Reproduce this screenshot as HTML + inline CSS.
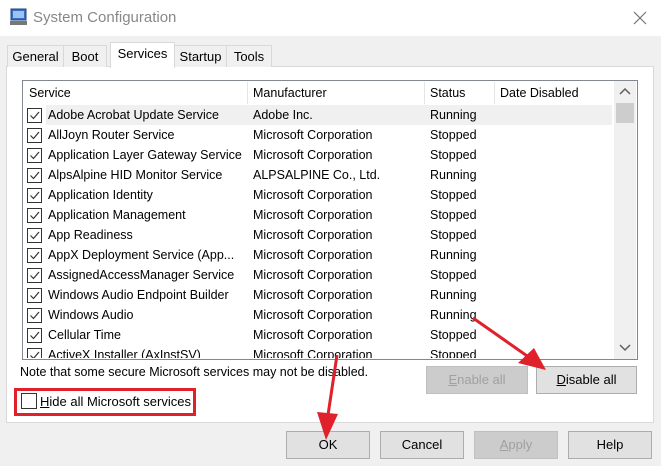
<!DOCTYPE html><html><head><style>
body{margin:0;width:661px;height:466px;background:#f0f0f0;font-family:"Liberation Sans",sans-serif;font-size:12.5px;color:#000;position:relative;overflow:hidden}
.a{position:absolute}
.title{left:0;top:0;width:661px;height:36px;background:#fff}
.tab{position:absolute;top:45px;height:21px;border:1px solid #d9d9d9;border-bottom:none;background:#f0f0f0;line-height:22px;text-align:center;font-size:13px}
.panel{left:6px;top:66px;width:646px;height:355px;background:#fff;border:1px solid #d9d9d9}
.list{left:22px;top:80px;width:614px;height:278px;border:1px solid #828790;background:#fff;overflow:hidden}
.row{position:absolute;left:0;height:20px;width:590px;line-height:20px}
.row span{position:absolute;white-space:nowrap}
.cb{position:absolute;left:4px;top:3px;width:13px;height:13px;border:1px solid #333;background:#fff}
.cb svg{position:absolute;left:1px;top:1px}
.btn{position:absolute;height:26px;border:1px solid #adadad;background:#e1e1e1;text-align:center;line-height:26px;font-size:13px}
.dis{color:#a0a0a0;background:#ccc;border-color:#bfbfbf}
</style></head><body>
<div class="a title"></div>
<svg class="a" style="left:9px;top:8px" width="20" height="18"><rect x="2" y="1" width="15" height="11" fill="#3a6fc9" stroke="#1c3f80"/><rect x="4" y="3" width="11" height="7" fill="#9cc3f0"/><rect x="1" y="13" width="17" height="4" fill="#777"/></svg>
<div class="a" style="left:33px;top:9px;font-size:15px;color:#888">System Configuration</div>
<svg class="a" style="left:633px;top:11px" width="14" height="14"><path d="M1 1L13 13M13 1L1 13" stroke="#777" stroke-width="1.2"/></svg>
<div class="a panel"></div>
<div class="tab" style="left:7px;width:55px">General</div>
<div class="tab" style="left:63px;width:42px">Boot</div>
<div class="tab" style="left:110px;top:42px;height:25px;width:63px;background:#fff;z-index:2">Services</div>
<div class="tab" style="left:174px;width:51px">Startup</div>
<div class="tab" style="left:226px;width:44px">Tools</div>
<div class="a list">
<div class="row" style="top:1px;height:22px;line-height:22px">
<span style="left:6px">Service</span><span style="left:230px">Manufacturer</span><span style="left:407px">Status</span><span style="left:477px">Date Disabled</span>
<div class="a" style="left:224px;top:0;width:1px;height:22px;background:#e5e5e5"></div>
<div class="a" style="left:401px;top:0;width:1px;height:22px;background:#e5e5e5"></div>
<div class="a" style="left:471px;top:0;width:1px;height:22px;background:#e5e5e5"></div>
</div>
<div class="a" style="left:23px;top:24px;width:566px;height:20px;background:#f0f0f0"></div>
<div class="a" style="left:591px;top:0;width:22px;height:278px;background:#f0f0f0"></div>
<div class="a" style="left:593px;top:22px;width:18px;height:20px;background:#cdcdcd"></div>
<svg class="a" style="left:596px;top:7px" width="12" height="8"><path d="M1 6L6 1L11 6" stroke="#606060" fill="none" stroke-width="1.5"/></svg>
<svg class="a" style="left:596px;top:263px" width="12" height="8"><path d="M1 1L6 6L11 1" stroke="#606060" fill="none" stroke-width="1.5"/></svg>
</div>
<div id="rows"></div>
<script>
var d=[["Adobe Acrobat Update Service","Adobe Inc.","Running"],["AllJoyn Router Service","Microsoft Corporation","Stopped"],["Application Layer Gateway Service","Microsoft Corporation","Stopped"],["AlpsAlpine HID Monitor Service","ALPSALPINE  Co., Ltd.","Running"],["Application Identity","Microsoft Corporation","Stopped"],["Application Management","Microsoft Corporation","Stopped"],["App Readiness","Microsoft Corporation","Stopped"],["AppX Deployment Service (App...","Microsoft Corporation","Running"],["AssignedAccessManager Service","Microsoft Corporation","Stopped"],["Windows Audio Endpoint Builder","Microsoft Corporation","Running"],["Windows Audio","Microsoft Corporation","Running"],["Cellular Time","Microsoft Corporation","Stopped"],["ActiveX Installer (AxInstSV)","Microsoft Corporation","Stopped"]];
var h='<div class="a" style="left:23px;top:105px;width:589px;height:253px;overflow:hidden">';
d.forEach(function(r,i){h+='<div class="row" style="top:'+(i*20)+'px"><div class="cb"><svg width="11" height="11"><path d="M1.5 5.5L4.5 8.5L10 2" stroke="#333" fill="none" stroke-width="1.2"/></svg></div><span style="left:25px">'+r[0]+'</span><span style="left:230px">'+r[1]+'</span><span style="left:407px">'+r[2]+'</span></div>';});
h+='</div>';document.getElementById('rows').innerHTML=h;
</script>
<div class="a" style="left:20px;top:365px">Note that some secure Microsoft services may not be disabled.</div>
<div class="btn dis" style="left:426px;top:366px;width:100px"><u>E</u>nable all</div>
<div class="btn" style="left:536px;top:366px;width:99px"><u>D</u>isable all</div>
<div class="a" style="left:14px;top:388px;width:176px;height:22px;border:3px solid #e0202a"></div>
<div class="a" style="left:21px;top:393px;width:14px;height:14px;border:1px solid #333;background:#fff"></div>
<div class="a" style="left:40px;top:394px;font-size:13px"><u>H</u>ide all Microsoft services</div>
<div class="btn" style="left:286px;top:431px;width:82px">OK</div>
<div class="btn" style="left:380px;top:431px;width:82px">Cancel</div>
<div class="btn dis" style="left:474px;top:431px;width:82px"><u>A</u>pply</div>
<div class="btn" style="left:568px;top:431px;width:82px">Help</div>
<svg class="a" style="left:0;top:0" width="661" height="466">
<path d="M473 318L530 358" stroke="#e0202a" stroke-width="3"/><path d="M546 370L518 363L534 348Z" fill="#e0202a"/>
<path d="M337 355L328 415" stroke="#e0202a" stroke-width="3"/><path d="M326 440L317 412L338 414Z" fill="#e0202a"/>
</svg>
</body></html>
